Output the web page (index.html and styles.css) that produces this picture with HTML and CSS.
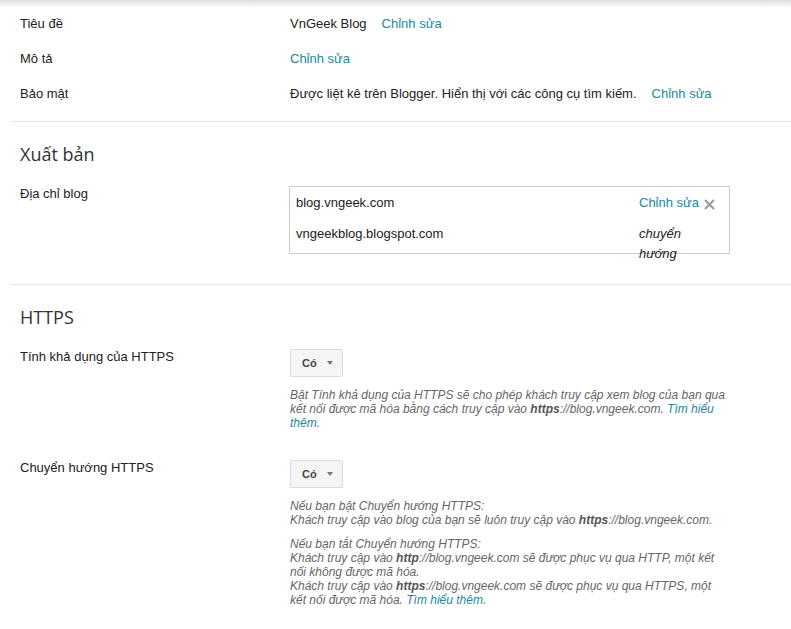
FILE: index.html
```html
<!DOCTYPE html>
<html>
<head>
  <meta charset="utf-8">
  <title>Cài đặt - VnGeek Blog</title>
  <link rel="stylesheet" href="styles.css">
</head>
<body>

  <div class="top-shade"></div>

  <div class="settings">

    <section class="group group-basic">
      <div class="row">
        <div class="label">Tiêu đề</div>
        <div class="value">VnGeek Blog<a class="edit" href="#">Chỉnh sửa</a></div>
      </div>
      <div class="row">
        <div class="label">Mô tả</div>
        <div class="value"><a class="edit first" href="#">Chỉnh sửa</a></div>
      </div>
      <div class="row">
        <div class="label">Bảo mật</div>
        <div class="value">Được liệt kê trên Blogger. Hiển thị với các công cụ tìm kiếm.<a class="edit" href="#">Chỉnh sửa</a></div>
      </div>
    </section>

    <section class="group">
      <h3 class="group-title">Xuất bản</h3>
      <div class="row">
        <div class="label">Địa chỉ blog</div>
        <div class="value">
          <div class="addr-box">
            <div class="addr-row">
              <span class="addr-url">blog.vngeek.com</span>
              <a class="addr-edit" href="#">Chỉnh sửa</a>
              <span class="addr-remove">
                <svg width="11" height="11" viewBox="0 0 11 11">
                  <path d="M1 1 L10 10 M10 1 L1 10" stroke="#9e9e9e" stroke-width="2.4" fill="none"/>
                </svg>
              </span>
            </div>
            <div class="addr-row">
              <span class="addr-url">vngeekblog.blogspot.com</span>
              <span class="addr-note">chuyển hướng</span>
              <span></span>
            </div>
          </div>
        </div>
      </div>
    </section>

    <section class="group">
      <h3 class="group-title">HTTPS</h3>

      <div class="row">
        <div class="label">Tính khả dụng của HTTPS</div>
        <div class="value">
          <div class="dropdown">Có <span class="caret"></span></div>
          <div class="help">
            <p>Bật Tính khả dụng của HTTPS sẽ cho phép khách truy cập xem blog của bạn qua kết nối được mã hóa bằng cách truy cập vào <b>https</b>://blog.vngeek.com. <a href="#">Tìm hiểu thêm.</a></p>
          </div>
        </div>
      </div>

      <div class="row row-spaced">
        <div class="label">Chuyển hướng HTTPS</div>
        <div class="value">
          <div class="dropdown">Có <span class="caret"></span></div>
          <div class="help">
            <p>Nếu bạn bật Chuyển hướng HTTPS:<br>
            Khách truy cập vào blog của bạn sẽ luôn truy cập vào <b>https</b>://blog.vngeek.com.</p>
            <p>Nếu bạn tắt Chuyển hướng HTTPS:<br>
            Khách truy cập vào <b>http</b>://blog.vngeek.com sẽ được phục vụ qua HTTP, một kết nối không được mã hóa.<br>
            Khách truy cập vào <b>https</b>://blog.vngeek.com sẽ được phục vụ qua HTTPS, một kết nối được mã hóa. <a href="#">Tìm hiểu thêm</a>.</p>
          </div>
        </div>
      </div>
    </section>

  </div>

</body>
</html>
```

FILE: styles.css
```css
body {
  margin: 0;
  font-family: "Liberation Sans", Arial, sans-serif;
  font-size: 13px;
  color: #222;
  background-color: #fff;
}

a {
  color: #21879e;
  text-decoration: none;
}

.top-shade {
  position: absolute;
  top: 0;
  left: 0;
  right: 0;
  height: 8px;
  background: linear-gradient(#dedede, rgba(255, 255, 255, 0));
}

.settings {
  padding-left: 10px;
}

.group {
  padding: 20px 0 30px 10px;
  border-top: 1px solid #e6e6e6;
}

.group-basic {
  border-top: none;
  padding-top: 6px;
  padding-bottom: 10px;
}

.group-title {
  margin: 0 0 20px 0;
  font-family: "Open Sans", sans-serif;
  font-size: 18px;
  font-weight: normal;
  line-height: 24px;
  color: #333;
}

.row {
  display: flex;
  line-height: 16px;
}

.group-basic .row {
  padding: 10px 0 9px 0;
}

.row-spaced {
  margin-top: 30px;
}

.label {
  width: 270px;
  flex-shrink: 0;
}

.value {
  width: 440px;
}

.edit {
  margin-left: 15px;
}

.edit.first {
  margin-left: 0;
}

/* blog address box */
.addr-box {
  box-sizing: border-box;
  width: 441px;
  height: 68px;
  margin-left: -1px;
  padding: 0 6px;
  border: 1px solid #ccc;
}

.addr-row {
  display: grid;
  grid-template-columns: 1fr 65px 19px;
  padding: 6px 0 5px 0;
  line-height: 20px;
}

.addr-note {
  font-style: italic;
}

.addr-remove {
  display: flex;
  align-items: center;
  height: 20px;
  padding-top: 3px;
  box-sizing: border-box;
}

/* https settings */
.dropdown {
  box-sizing: border-box;
  display: inline-flex;
  align-items: center;
  gap: 10px;
  height: 28px;
  padding: 0 9px 0 11px;
  border: 1px solid #dcdcdc;
  border-radius: 2px;
  background-color: #f5f5f5;
  font-size: 11px;
  font-weight: bold;
  color: #444;
}

.caret {
  width: 0;
  height: 0;
  border-top: 4px solid #777;
  border-left: 3.5px solid transparent;
  border-right: 3.5px solid transparent;
}

.help {
  margin-top: 11px;
  font-size: 12px;
  font-style: italic;
  line-height: 14px;
  color: #666;
}

.help p {
  margin: 0 0 10px 0;
}

.help p:last-child {
  margin-bottom: 0;
}

.help b {
  color: #555;
}
```
